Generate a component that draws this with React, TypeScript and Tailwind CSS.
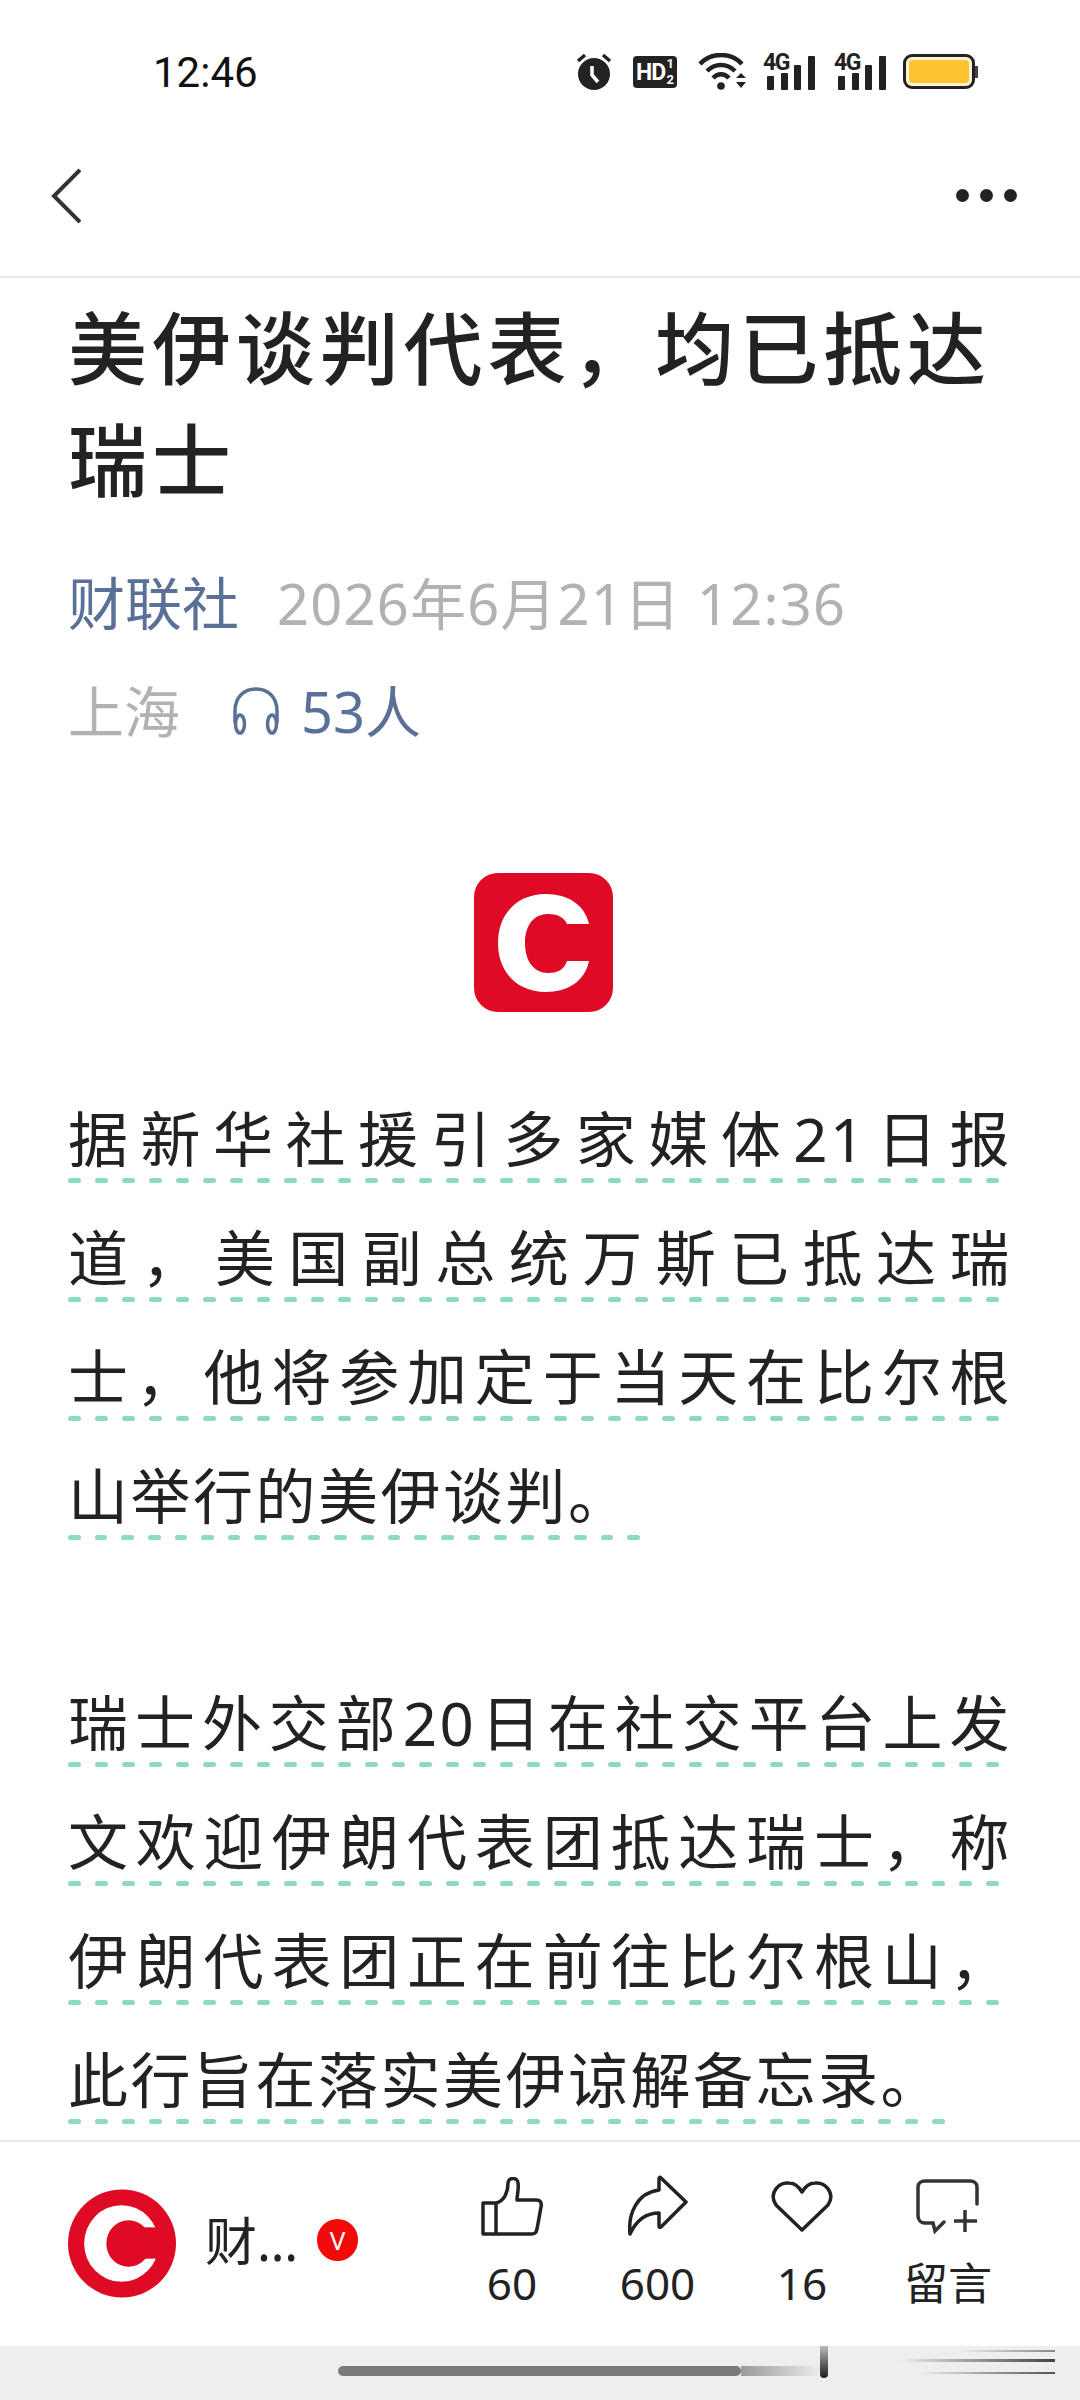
import React from 'react';

const cjk = "font-['Noto_Sans','Noto_Sans_CJK_SC',sans-serif]";

function Alarm() {
  return (
    <svg width="36" height="37" viewBox="0 0 36 37" fill="none">
      <circle cx="18" cy="21" r="16" fill="#222" />
      <path d="M2 8 L9 2 M34 8 L27 2" stroke="#222" strokeWidth="3.5" />
      <path d="M16 13 V22 L22 29" stroke="#fff" strokeWidth="3.5" />
    </svg>
  );
}

function HdBadge() {
  return (
    <div className="relative w-[44px] h-[32px] rounded-[4px] bg-[#222] text-white font-['Roboto',sans-serif] font-bold">
      <span className="absolute left-[3px] top-[5px] text-[23px] leading-[23px] tracking-[-1px]">HD</span>
      <span className="absolute right-[3px] top-[1px] text-[13px] leading-[14px]">1</span>
      <span className="absolute right-[3px] bottom-[1px] text-[13px] leading-[14px]">2</span>
    </div>
  );
}

function Wifi() {
  return (
    <svg width="49" height="37" viewBox="0 0 49 37" fill="none">
      <path d="M2 11 C13 -1 33 -1 44 11" stroke="#222" strokeWidth="4.5" />
      <path d="M9 18 C17 10 29 10 37 18" stroke="#222" strokeWidth="4.5" />
      <path d="M15 25 C20 20 26 20 31 25" stroke="#222" strokeWidth="4.5" />
      <circle cx="23" cy="33" r="3.8" fill="#222" />
      <path d="M38 25 L43 20 L48 25 Z M38 29 L48 29 L43 35 Z" fill="#222" />
    </svg>
  );
}

function Signal() {
  return (
    <div className="relative w-[52px] h-[37px]">
      <span className="absolute left-0 top-[-2px] font-['Roboto',sans-serif] font-bold text-[23px] leading-[23px] tracking-[-1.5px] text-[#222]">4G</span>
      <div className="absolute left-[4px] right-0 bottom-0 flex items-end justify-between">
        <div className="w-[7px] h-[14px] bg-[#222] rounded-[1px]" />
        <div className="w-[7px] h-[17px] bg-[#222] rounded-[1px]" />
        <div className="w-[7px] h-[25px] bg-[#222] rounded-[1px]" />
        <div className="w-[7px] h-[34px] bg-[#222] rounded-[1px]" />
      </div>
    </div>
  );
}

function Battery() {
  return (
    <div className="flex items-center">
      <div className="w-[72px] h-[35px] rounded-[9px] border-[3px] border-[#222] p-[3px] bg-[#fdf3d3]">
        <div className="w-full h-full rounded-[4px] bg-[#fcc42f]" />
      </div>
      <div className="w-[3px] h-[12px] bg-[#444]" />
    </div>
  );
}

function Dashes({ count }: { count: number }) {
  return (
    <div className="flex gap-[14px] h-[5px]">
      {Array.from({ length: count }).map((_, i) => (
        <div key={i} className="w-[13px] h-[5px] rounded-full bg-[#8edbb9]" />
      ))}
    </div>
  );
}

function Line({ text, justify = true, dashes = 35 }: { text: string; justify?: boolean; dashes?: number }) {
  return (
    <div className="h-[119px] flex flex-col justify-end">
      <div
        className={
          justify
            ? 'text-[60px] leading-[80px] tracking-[2.5px] text-[#222] whitespace-nowrap text-justify [text-align-last:justify]'
            : 'text-[60px] leading-[80px] tracking-[2.5px] text-[#222] whitespace-nowrap'
        }
      >
        {text}
      </div>
      <div className="mt-[-1px]">
        <Dashes count={dashes} />
      </div>
    </div>
  );
}

function Thumb() {
  return (
    <svg width="62" height="59" viewBox="0 0 62 59" fill="none" stroke="#222" strokeWidth="3.5" strokeLinejoin="round">
      <path d="M2 26 H15 C24 24 27 14 27 6 C27 0 37 0 37 6 C38 12 36 18 36 23 H55 C59 23 61 25 60 30 L56 52 C55 56 54 57 50 57 H2 Z" />
      <path d="M15 26 V57" />
    </svg>
  );
}

function Share() {
  return (
    <svg width="60" height="62" viewBox="0 0 60 62" fill="none" stroke="#222" strokeWidth="3.5" strokeLinejoin="round">
      <path d="M33 3 L58 27 L33 52 C31 53 31 52 31 50 V38 C18 38 8 46 2 59 C0 40 8 18 31 15 V4 C31 2 32 2 33 3 Z" />
    </svg>
  );
}

function Heart() {
  return (
    <svg width="62" height="51" viewBox="0 0 62 51" fill="none" stroke="#222" strokeWidth="3.5" strokeLinejoin="round">
      <path d="M31 49 L5 24 C-3 12 8 1 18 2 C24 2 28 6 31 11 C34 6 38 2 44 2 C54 1 65 12 57 24 Z" />
    </svg>
  );
}

function Comment() {
  return (
    <svg width="64" height="55" viewBox="0 0 64 55" fill="none" stroke="#333" strokeWidth="3.5" strokeLinecap="round">
      <path d="M61 25 V8 C61 4 58 2 54 2 H9 C5 2 2 4 2 8 V37 C2 41 5 44 9 44 H17 L19 52 L28 43" />
      <path d="M38 42 H61 M49 31 V53" strokeLinecap="butt" />
    </svg>
  );
}

function Action({ icon, label, width }: { icon: React.ReactNode; label: string; width: string }) {
  return (
    <div className={`${width} flex flex-col items-center`}>
      <div className="h-[66px] flex items-center justify-center">{icon}</div>
      <div className="mt-[19px] text-[44px] leading-[50px] text-[#222]">{label}</div>
    </div>
  );
}

export default function App() {
  return (
    <div className={`${cjk} w-[1080px] h-[2400px] bg-white flex flex-col overflow-hidden`}>
      {/* Status bar */}
      <div className="h-[130px] shrink-0 flex items-start justify-between pl-[153px] pr-[102px] pt-[53px]">
        <span className="font-['Roboto',sans-serif] text-[42px] leading-[40px] text-[#111]">12:46</span>
        <div className="flex items-center h-[37px]">
          <Alarm />
          <div className="ml-[21px]">
            <HdBadge />
          </div>
          <div className="ml-[21px]">
            <Wifi />
          </div>
          <div className="ml-[16px]">
            <Signal />
          </div>
          <div className="ml-[19px]">
            <Signal />
          </div>
          <div className="ml-[17px]">
            <Battery />
          </div>
        </div>
      </div>

      {/* Nav */}
      <div className="h-[148px] shrink-0 border-b-2 border-[#e9e9e9] flex items-start justify-between pl-[51px] pr-[63px] pt-[38px]">
        <svg width="30" height="56" viewBox="0 0 30 56" fill="none">
          <path d="M29 2 L3 28 L29 54" stroke="#333" strokeWidth="4" />
        </svg>
        <div className="flex gap-[11px] pt-[21px]">
          <div className="w-[13px] h-[13px] rounded-full bg-[#222]" />
          <div className="w-[13px] h-[13px] rounded-full bg-[#222]" />
          <div className="w-[13px] h-[13px] rounded-full bg-[#222]" />
        </div>
      </div>

      {/* Article */}
      <div className="flex-1 overflow-hidden pl-[68px] pr-[68px]">
        <h1 className="text-[79px] leading-[112px] font-medium tracking-[4.9px] text-[#222] pt-[15px] whitespace-nowrap">
          美伊谈判代表，均已抵达
          <br />
          瑞士
        </h1>
        <div className="mt-[51px] flex items-center h-[70px] whitespace-nowrap">
          <span className="text-[57px] leading-[70px] text-[#5a7096]">财联社</span>
          <span className="ml-[38px] text-[56px] leading-[70px] tracking-[1.2px] text-[#b2b2b2]">2026年6月21日 12:36</span>
        </div>
        <div className="mt-[38px] flex items-center h-[70px] whitespace-nowrap">
          <span className="text-[56px] leading-[70px] text-[#b2b2b2]">上海</span>
          <svg className="ml-[51px]" width="50" height="48" viewBox="0 0 50 48" fill="none" stroke="#5a7096" strokeWidth="3.5">
            <path d="M4 36 V24 C4 10 13 2 25 2 C37 2 46 10 46 24 V36" />
            <ellipse cx="9" cy="37" rx="4.5" ry="9" />
            <ellipse cx="41" cy="37" rx="4.5" ry="9" />
          </svg>
          <span className="ml-[20px] text-[56px] leading-[70px] text-[#5a7096]">53人</span>
        </div>

        <div className="mt-[127px] flex justify-center pl-[6px]">
          <svg width="139" height="139" viewBox="0 0 139 139">
            <rect width="139" height="139" rx="24" fill="#df0a24" />
            <path
              d="M115 51 C111 32 94 21 72 21 C42 21 24 42 24 70 C24 98 42 119 72 119 C94 119 111 108 115 88 H93 C90 97 83 100 74 100 C60 100 51 88 51 70 C51 52 60 41 74 41 C83 41 90 44 93 51 Z"
              fill="#fff"
            />
          </svg>
        </div>

        <div className="mt-[52px]">
          <Line text="据新华社援引多家媒体21日报" />
          <Line text="道，美国副总统万斯已抵达瑞" />
          <Line text="士，他将参加定于当天在比尔根" />
          <div className="w-[572px] overflow-hidden">
            <Line text="山举行的美伊谈判。" justify={false} dashes={22} />
          </div>
        </div>
        <div className="mt-[108px]">
          <Line text="瑞士外交部20日在社交平台上发" />
          <Line text="文欢迎伊朗代表团抵达瑞士，称" />
          <Line text="伊朗代表团正在前往比尔根山，" />
          <Line text="此行旨在落实美伊谅解备忘录。" justify={false} dashes={33} />
        </div>
      </div>

      {/* Bottom action bar */}
      <div className="h-[206px] shrink-0 border-t-2 border-[#e9e9e9] flex pt-[31px] pl-[68px]">
        <svg className="mt-[16px]" width="108" height="109" viewBox="0 0 107 108">
          <circle cx="53.5" cy="54" r="53.5" fill="#df0a24" />
          <ellipse cx="53" cy="54" rx="37" ry="38" fill="#fff" />
          <ellipse cx="60" cy="54" rx="22" ry="23" fill="#df0a24" />
          <rect x="72" y="38" width="24" height="31" fill="#df0a24" />
        </svg>
        <div className="ml-[29px] mt-[38px] flex items-center h-[60px] w-[112px]">
          <span className="text-[52px] leading-[60px] text-[#222] whitespace-nowrap">财…</span>
        </div>
        <div className="mt-[46px] w-[41px] h-[42px] rounded-full bg-[#f20a0a] text-white text-[26px] leading-[42px] text-center">V</div>
        <div className="ml-[92px] flex">
          <Action icon={<Thumb />} label="60" width="w-[124px]" />
          <Action icon={<Share />} label="600" width="w-[167px]" />
          <Action icon={<Heart />} label="16" width="w-[122px]" />
          <Action icon={<Comment />} label="留言" width="w-[170px]" />
        </div>
      </div>

      {/* Gesture area */}
      <div className="relative h-[54px] shrink-0 bg-[#eeeeee]">
        <div className="absolute left-[338px] top-[20px] w-[403px] h-[10px] rounded-full bg-[#7a7a7a]" />
        <div className="absolute left-[741px] top-[20px] w-[80px] h-[10px] bg-gradient-to-r from-[#9a9a9a] to-[#eeeeee]" />
        <div className="absolute left-[820px] top-0 w-[8px] h-[32px] rounded-b-full bg-gradient-to-b from-[#bbbbbb] to-[#222222]" />
        <div className="absolute left-[960px] top-[4px] w-[95px] h-[2px] bg-gradient-to-r from-[#eeeeee] to-[#888888]" />
        <div className="absolute left-[900px] top-[13px] w-[155px] h-[3px] bg-gradient-to-r from-[#eeeeee] to-[#444444]" />
        <div className="absolute left-[920px] top-[26px] w-[135px] h-[2px] bg-gradient-to-r from-[#eeeeee] to-[#555555]" />
      </div>
    </div>
  );
}
